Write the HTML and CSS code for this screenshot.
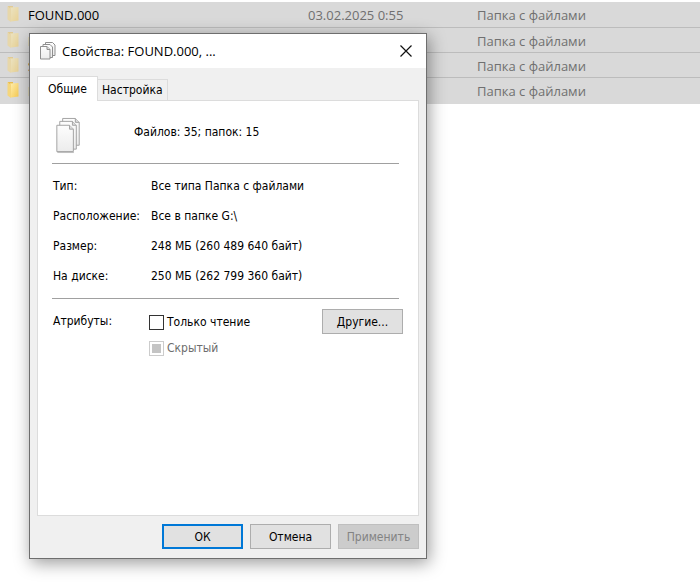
FILE: index.html
```html
<!DOCTYPE html>
<html lang="ru">
<head>
    <meta charset="UTF-8">
    <meta name="viewport" content="width=device-width, initial-scale=1.0">
    <title>Свойства</title>
    <link rel="stylesheet" href="styles.css">
</head>
<body>
    <svg class="defs" width="0" height="0" aria-hidden="true">
        <linearGradient id="fold" x1="0" y1="0" x2="1" y2="1">
            <stop offset="0" stop-color="#ffeeb0"/>
            <stop offset="1" stop-color="#f7cb52"/>
        </linearGradient>
        <linearGradient id="paper" x1="0" y1="0" x2="0" y2="1">
            <stop offset="0" stop-color="#fdfdfd"/>
            <stop offset="1" stop-color="#ececec"/>
        </linearGradient>
        <symbol id="folder" viewBox="0 0 12 16">
            <path d="M1 0h5v15l-5-2z" fill="#e9bd50"/>
            <path d="M3 1.500l8.500-.5v13.500l-7.500 1V4z" fill="url(#fold)"/>
            <path d="M.5 0l3.500 3v13L.5 13.500z" fill="#f5d67c"/>
        </symbol>
        <symbol id="pages" viewBox="0 0 26 38">
            <g fill="url(#paper)" stroke="#a2a2a2">
                <path d="M6.500 1.500h13l4 4v23.500h-17z"/>
                <path d="M19.500 1.500v4h4" fill="#ddd"/>
                <path d="M3.500 4.500h13l4 4v24.500h-17z"/>
                <path d="M16.500 4.500v4h4" fill="#ddd"/>
                <path d="M.5 8.500h13l4 4v23h-17z"/>
                <path d="M13.500 8.500v4h4" fill="#ddd"/>
            </g>
            <path d="M1 36.500h17" stroke="#bbb"/>
        </symbol>
        <symbol id="pages-small" viewBox="0 0 16 18">
            <g fill="url(#paper)" stroke="#8f8f8f">
                <path d="M5.500.5h7l2.500 2.500v10.500H5.500z"/>
                <path d="M3 2.500h7l2.500 2.500v10.500H3z"/>
                <path d="M.5 4.500h6.500l3 3v9.500H.5z"/>
                <path d="M7 4.500v3h3" fill="#ddd"/>
            </g>
        </symbol>
    </svg>

    <table class="files">
        <tbody>
            <tr class="dim">
                <td class="name"><svg class="folder"><use href="#folder"/></svg>FOUND.000</td>
                <td class="date">03.02.2025 0:55</td>
                <td class="type">Папка с файлами</td>
            </tr>
            <tr class="dim">
                <td class="name"><svg class="folder"><use href="#folder"/></svg>F</td>
                <td class="date"></td>
                <td class="type">Папка с файлами</td>
            </tr>
            <tr class="dim">
                <td class="name"><svg class="folder"><use href="#folder"/></svg>S</td>
                <td class="date"></td>
                <td class="type">Папка с файлами</td>
            </tr>
            <tr>
                <td class="name"><svg class="folder"><use href="#folder"/></svg>F</td>
                <td class="date"></td>
                <td class="type">Папка с файлами</td>
            </tr>
        </tbody>
    </table>

    <div class="dialog" role="dialog" aria-labelledby="title">
        <div class="titlebar">
            <svg class="title-icon"><use href="#pages-small"/></svg>
            <h1 id="title">Свойства: FOUND.000, ...</h1>
            <button class="close" aria-label="Закрыть">
                <svg width="12" height="12" viewBox="0 0 12 12"><path d="M.5.5l11 11M11.500.5l-11 11" stroke="#111" stroke-width="1.200"/></svg>
            </button>
        </div>

        <div class="content">
            <div class="tabs" role="tablist">
                <button class="tab active" role="tab" aria-selected="true">Общие</button>
                <button class="tab" role="tab" aria-selected="false">Настройка</button>
            </div>

            <div class="panel" role="tabpanel">
                <div class="summary">
                    <svg class="pages"><use href="#pages"/></svg>
                    <p>Файлов: 35; папок: 15</p>
                </div>

                <dl class="props">
                    <dt>Тип:</dt>
                    <dd>Все типа Папка с файлами</dd>
                    <dt>Расположение:</dt>
                    <dd>Все в папке G:\</dd>
                    <dt>Размер:</dt>
                    <dd>248 МБ (260 489 640 байт)</dd>
                    <dt>На диске:</dt>
                    <dd>250 МБ (262 799 360 байт)</dd>
                </dl>

                <div class="attributes">
                    <span class="attr-title">Атрибуты:</span>
                    <div class="checks">
                        <label><input type="checkbox">Только чтение</label>
                        <label class="disabled"><input type="checkbox" disabled>Скрытый</label>
                    </div>
                    <button class="btn">Другие...</button>
                </div>
            </div>

            <div class="actions">
                <button class="btn primary">ОК</button>
                <button class="btn">Отмена</button>
                <button class="btn" disabled>Применить</button>
            </div>
        </div>
    </div>
</body>
</html>
```
FILE: styles.css
```css
:root {
    --row: #d9d9d9;
    --face: #f0f0f0;
    --line: #dcdcdc;
    --rule: #a0a0a0;
    --accent: #0078d7;
}

* {
    margin: 0;
    padding: 0;
    box-sizing: border-box;
}

body {
    font-family: "Open Sans", "Noto Sans", sans-serif;
    font-size: 13px;
    background: #fff;
    color: #000;
}

.defs {
    position: absolute;
}

/* file list */
.files {
    width: 100%;
    margin-top: 2px;
    border-collapse: collapse;
    table-layout: fixed;
    background: var(--row);
    line-height: 18px;
    color: #707070;
}

.files td {
    height: 25px;
    padding-top: 4px;
    border-bottom: 1px solid #bcbcbc;
    vertical-align: top;
    white-space: nowrap;
}

.files tr:last-child td {
    height: 26px;
    border-bottom-color: var(--row);
}

.files .name {
    width: 308px;
    padding-left: 7px;
    color: #000;
}

.files .date {
    width: 169px;
}

.folder {
    width: 12px;
    height: 16px;
    margin-right: 9px;
    vertical-align: top;
}

.dim .folder {
    opacity: 0.5;
}

/* properties window */
.dialog {
    position: absolute;
    top: 33px;
    left: 29px;
    width: 398px;
    background: var(--face);
    border: 1px solid #6e6e6e;
    box-shadow: 2px 4px 16px rgba(0, 0, 0, 0.4);
    font-family: "DejaVu Sans Condensed", "Noto Sans", sans-serif;
    font-size: 12px;
    line-height: 16px;
}

.titlebar {
    display: flex;
    align-items: center;
    height: 34px;
    padding: 0 14px 0 10px;
    background: #fff;
    font-family: "Open Sans", "Noto Sans", sans-serif;
}

.title-icon {
    width: 16px;
    height: 18px;
    margin-right: 6px;
}

h1 {
    flex: 1;
    font-size: 13px;
    font-weight: 400;
}

.close {
    display: flex;
    border: 0;
    background: none;
}

.content {
    padding: 8px 7px 9px;
}

.tabs {
    display: flex;
    align-items: flex-end;
}

.tab {
    height: 21px;
    padding: 0 4px;
    border: 1px solid var(--line);
    border-bottom: 0;
    border-left: 0;
    background: var(--face);
    font: inherit;
    color: #000;
}

.tab.active {
    height: 25px;
    margin-bottom: -1px;
    padding: 0 10px;
    border-left: 1px solid var(--line);
    background: #fff;
    z-index: 1;
}

.panel {
    min-height: 416px;
    padding: 16px 15px 0 14px;
    border: 1px solid var(--line);
    background: #fff;
}

.summary {
    display: flex;
    padding: 0 4px 9px;
    border-bottom: 1px solid var(--rule);
    margin-right: 4px;
}

.summary p {
    margin-left: 52px;
    padding-top: 7px;
}

.pages {
    width: 26px;
    height: 37px;
}

.props {
    display: grid;
    grid-template-columns: 98px 1fr;
    row-gap: 14px;
    margin-right: 4px;
    padding: 14px 1px;
    border-bottom: 1px solid var(--rule);
}

.attributes {
    display: flex;
    align-items: flex-start;
    padding: 10px 0 0 1px;
}

.attr-title {
    width: 96px;
    padding-top: 4px;
}

.checks {
    display: flex;
    flex: 1;
    flex-direction: column;
    gap: 10px;
    padding-top: 5px;
}

.checks label {
    display: flex;
    align-items: center;
    gap: 3px;
}

.checks input {
    appearance: none;
    display: grid;
    place-items: center;
    width: 15px;
    height: 15px;
    border: 1px solid #333;
    background: #fff;
}

.checks input:disabled {
    border-color: #ccc;
}

.checks input:disabled::before {
    content: '';
    width: 9px;
    height: 9px;
    background: #c4c4c4;
}

.disabled {
    color: #6d6d6d;
}

.btn {
    width: 81px;
    height: 25px;
    border: 1px solid #adadad;
    background: #e1e1e1;
    font: inherit;
    color: #000;
}

.btn.primary {
    border: 2px solid var(--accent);
}

.btn:disabled {
    border-color: #bfbfbf;
    background: #ccc;
    color: #838383;
}

.actions {
    display: flex;
    justify-content: flex-end;
    gap: 7px;
    padding-top: 8px;
}
```
